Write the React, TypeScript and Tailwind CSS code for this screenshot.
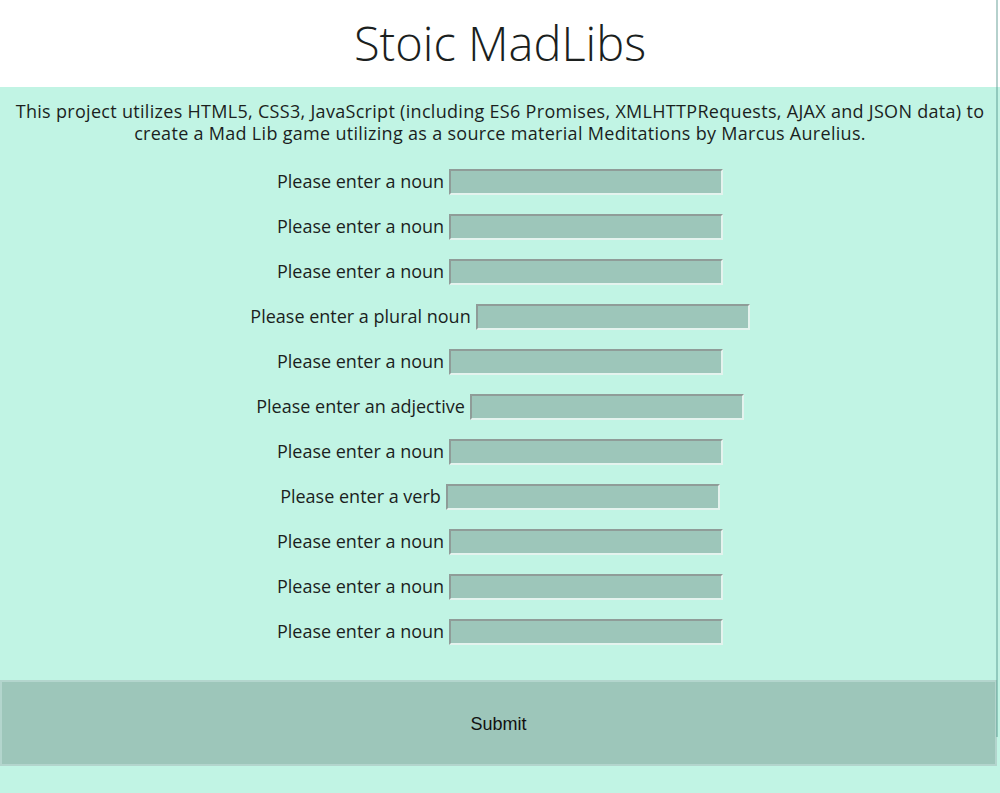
import React from 'react';

const fields = [
  'Please enter a noun',
  'Please enter a noun',
  'Please enter a noun',
  'Please enter a plural noun',
  'Please enter a noun',
  'Please enter an adjective',
  'Please enter a noun',
  'Please enter a verb',
  'Please enter a noun',
  'Please enter a noun',
  'Please enter a noun',
];

const App = () => {
  return (
    <div className="relative min-h-screen bg-[#c1f4e4] font-['Open_Sans',sans-serif] text-[#1b1f1e]">
      <header className="h-[87px] bg-white flex items-center justify-center">
        <h1 className="text-[47px] font-light leading-none">Stoic MadLibs</h1>
      </header>

      <main>
        <p className="pt-[13px] px-3 text-center text-[18px] leading-[22px] tracking-[0.3px]">
          This project utilizes HTML5, CSS3, JavaScript (including ES6 Promises, XMLHTTPRequests, AJAX and JSON data) to create a Mad Lib game utilizing as a source material Meditations by Marcus Aurelius.
        </p>

        <form className="mt-[15px]" onSubmit={(e) => e.preventDefault()}>
          {fields.map((label, i) => (
            <div key={i} className="h-[45px] flex items-center justify-center gap-[5px]">
              <label className="text-[18px]">{label}</label>
              <input
                type="text"
                className="w-[274px] h-[26px] bg-[#9dc6ba] border-2 border-t-[#8f9c98] border-l-[#8f9c98] border-b-[#e4f3ee] border-r-[#e4f3ee] outline-none"
              />
            </div>
          ))}

          <button
            type="submit"
            className="mt-[26px] w-[997px] h-[86px] pt-[3px] bg-[#9dc6ba] border-2 border-[#b3d5cd] font-['Liberation_Sans',sans-serif] text-[18px] text-[#111]"
          >
            Submit
          </button>
        </form>
      </main>

      <div className="absolute top-0 right-[2px] w-[2px] h-[737px] bg-[#468c82]/40" />
    </div>
  );
};

export default App;
